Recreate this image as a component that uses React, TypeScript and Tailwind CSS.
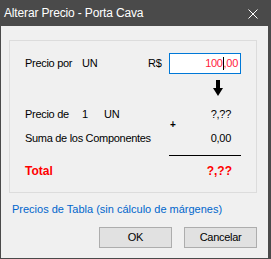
import React from "react";

const F = { fontFamily: '"Liberation Sans", Arial, sans-serif' };

export default function App() {
  return (
    <div
      className="w-[271px] h-[259px] bg-[#4a4a4a] flex flex-col pl-[1px] pr-[3px] pb-[1px] text-black"
      style={F}
    >
      <div className="h-[26px] flex items-center justify-between pl-[3px] pr-[10px] text-white text-[12px] tracking-[-0.15px] shrink-0">
        <span>Alterar Precio - Porta Cava</span>
        <svg width="10" height="10" viewBox="0 0 10 10" className="mt-[1px]">
          <path d="M0.5 0.5 L9.5 9.5 M9.5 0.5 L0.5 9.5" stroke="#ffffff" strokeWidth="1" />
        </svg>
      </div>
      <div className="flex-1 bg-[#f0f0f0] flex flex-col text-[11px] tracking-[-0.3px]">
        <div className="mt-[14px] ml-[8px] w-[248px] h-[153px] border border-[#dcdcdc] flex flex-col">
          {/* Row 1 */}
          <div className="mt-[12px] h-[21px] flex items-center">
            <span className="w-[72px] pl-[15px] whitespace-nowrap">Precio por</span>
            <span className="w-[66px]">UN</span>
            <span className="w-[21px]">R$</span>
            <div className="w-[72px] h-[21px] border border-[#0078d7] bg-white flex items-center justify-end pr-[2px] text-[#ff1a3c]">
              <span>100</span>
              <span className="w-[1px] h-[13px] bg-black" />
              <span>,00</span>
            </div>
          </div>
          {/* Arrow */}
          <div className="mt-[6px] ml-[203px] h-[16px]">
            <svg width="10" height="16" viewBox="0 0 10 16">
              <rect x="3" y="0" width="4" height="9" fill="#000" />
              <polygon points="0,8 10,8 5,16" fill="#000" />
            </svg>
          </div>
          {/* Row 2 */}
          <div className="mt-[11px] h-[14px] flex items-center">
            <span className="w-[72px] pl-[15px] whitespace-nowrap">Precio de</span>
            <span className="w-[22px]">1</span>
            <span className="w-[65px]">UN</span>
            <span className="w-[72px] text-right pr-[10px]">?,??</span>
          </div>
          {/* Plus */}
          <div className="h-[8px] flex items-center">
            <span className="ml-[160px] text-[10px] font-bold leading-none">+</span>
          </div>
          {/* Row 3 */}
          <div className="mt-[2px] h-[14px] flex items-center">
            <span className="w-[159px] pl-[15px] whitespace-nowrap">Suma de los Componentes</span>
            <span className="w-[72px] text-right pr-[10px]">0,00</span>
          </div>
          {/* Line */}
          <div className="mt-[10px] ml-[159px] w-[72px] h-[1px] bg-black" />
          {/* Total */}
          <div className="mt-[8px] h-[14px] flex items-center text-[#ff0000] font-bold text-[12px] tracking-[0px]">
            <span className="w-[159px] pl-[15px]">Total</span>
            <span className="w-[72px] text-right pr-[9px]">?,??</span>
          </div>
        </div>
        <div className="mt-[9px] ml-[11px] h-[14px] leading-[14px] text-[#0066cc] tracking-[0px] whitespace-nowrap">
          Precios de Tabla (sin cálculo de márgenes)
        </div>
        <div className="mt-[11px] flex justify-end gap-[12px] pr-[11px]">
          <button className="w-[73px] h-[21px] bg-[#e1e1e1] border border-[#adadad] flex items-center justify-center">
            OK
          </button>
          <button className="w-[73px] h-[21px] bg-[#e1e1e1] border border-[#adadad] flex items-center justify-center">
            Cancelar
          </button>
        </div>
      </div>
    </div>
  );
}
